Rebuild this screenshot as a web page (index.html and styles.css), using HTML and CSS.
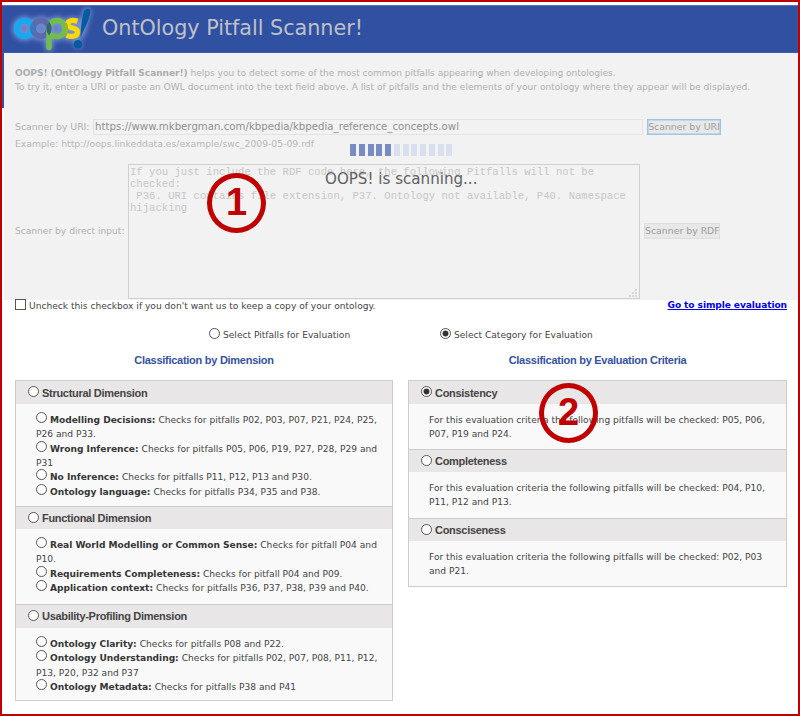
FILE: index.html
```html
<!DOCTYPE html>
<html lang="en">
<head>
<meta charset="utf-8">
<title>OOPS! OntOlogy Pitfall Scanner!</title>
<link rel="stylesheet" href="styles.css">
</head>
<body>
<div class="page">
  <header class="banner">
    <svg class="logo" width="92" height="48" viewBox="6 5 92 48">
      <defs><filter id="glow" x="-30%" y="-30%" width="160%" height="160%"><feGaussianBlur stdDeviation="2.6"/></filter></defs>
      <g filter="url(#glow)" fill="#6f8bd0" stroke="#90a9e2" stroke-width="8" opacity=".75">
        <circle cx="24.5" cy="28.500" r="8"/><circle cx="41" cy="28.500" r="8"/><circle cx="57" cy="28.500" r="8"/>
        <path d="M49 29V47M77 22Q68 19 68 24Q69 28 74 29Q79 33 76 36Q72 38 67 36M87 12L81 34M78 44h.1" stroke-linecap="round"/>
      </g>
      <circle cx="24.500" cy="28.500" r="7.800" fill="none" stroke="#16a8f0" stroke-width="5.800"/>
      <circle cx="41" cy="28.500" r="7.800" fill="none" stroke="#5d69ad" stroke-width="5.800"/>
      <path d="M49 47.500V28.500a8 8 0 1 1 8 8q-3 0-5-1" fill="none" stroke="#6fbd4c" stroke-width="5.500" stroke-linecap="round"/>
      <path d="M32.750 21.700a10.700 10.700 0 0 1 0 13.600a10.700 10.700 0 0 1 0-13.600" fill="#3c7abb"/>
      <path d="M49 21.400a10.700 10.700 0 0 1 0 14.200a10.700 10.700 0 0 1 0-14.200" fill="#37617f"/>
      <path d="M77.500 21.200C72 19.500 67.700 20.800 67.700 24.200C67.700 29.300 77.600 26.800 77.600 32C77.600 36.300 72 37.500 66.500 35.400" fill="none" stroke="#fbd905" stroke-width="5.200"/>
      <path d="M65.500 23q2.500 5.500 .5 11.500" fill="none" stroke="#93b82a" stroke-width="2.500"/>
      <path d="M80.500 37.500C81 27 82 15 84.500 10.500Q87 7.500 90 9.500Q91 14 87.500 22Z" fill="#045b9e"/>
      <circle cx="78" cy="44.200" r="4.300" fill="#045b9e"/>
    </svg>
    <h1>OntOlogy Pitfall Scanner!</h1>
  </header>

  <section class="scanner">
    <p class="intro"><b>OOPS! (OntOlogy Pitfall Scanner!)</b> <span class="first">helps you to detect some of the most common pitfalls appearing when developing ontologies.</span><br><span>To try it, enter a URI or paste an OWL document into the text field above. A list of pitfalls and the elements of your ontology where they appear will be displayed.</span></p>
    <div class="uri-row">
      <span class="uri-label">Scanner by URI:</span>
      <div class="uri-field"><span>https://www.mkbergman.com/kbpedia/kbpedia_reference_concepts.owl</span></div>
      <div class="btn focused"><span>Scanner by URI</span></div>
    </div>
    <div class="example"><span>Example: http://oops.linkeddata.es/example/swc_2009-05-09.rdf</span></div>
    <div class="rdf-row">
      <span class="rdf-label">Scanner by direct input:</span>
      <div class="rdf-field">If you just include the RDF code here, the following Pitfalls will not be<br>checked:<br> P36. URI contains file extension, P37. Ontology not available, P40. Namespace<br>hijacking<svg class="grip" width="8" height="8"><path d="M6 0h2v2H6zM3 3h2v2H3zM6 3h2v2H6zM0 6h2v2H0zM3 6h2v2H3zM6 6h2v2H6z" fill="#d6d6d6"/></svg></div>
      <div class="btn"><span>Scanner by RDF</span></div>
    </div>
    <div class="progress"><i class="on"></i><i class="on"></i><i class="on"></i><i class="on"></i><i class="on"></i><i></i><i></i><i></i><i></i><i></i><i></i><i></i></div>
    <div class="status">OOPS! is scanning...</div>
  </section>

  <div class="options">
    <i class="check"></i><span class="keep">Uncheck this checkbox if you don't want us to keep a copy of your ontology.</span>
    <a class="simple">Go to simple evaluation</a>
  </div>
  <div class="modes">
    <div><i class="radio"></i><span>Select Pitfalls for Evaluation</span></div>
    <div><i class="radio sel"></i><span>Select Category for Evaluation</span></div>
  </div>

  <main class="columns">
    <section>
      <h2>Classification by Dimension</h2>
      <div class="table dims">
        <h3><i class="radio"></i><span>Structural Dimension</span></h3>
        <div class="cell">
          <p><i class="radio"></i><b>Modelling Decisions:</b> Checks for pitfalls P02, P03, P07, P21, P24, P25,</p>
          <p>P26 and P33.</p>
          <p><i class="radio"></i><b>Wrong Inference:</b> Checks for pitfalls P05, P06, P19, P27, P28, P29 and</p>
          <p>P31</p>
          <p><i class="radio"></i><b>No Inference:</b> Checks for pitfalls P11, P12, P13 and P30.</p>
          <p><i class="radio"></i><b>Ontology language:</b> Checks for pitfalls P34, P35 and P38.</p>
        </div>
        <h3><i class="radio"></i><span>Functional Dimension</span></h3>
        <div class="cell">
          <p><i class="radio"></i><b>Real World Modelling or Common Sense:</b> Checks for pitfall P04 and</p>
          <p>P10.</p>
          <p><i class="radio"></i><b>Requirements Completeness:</b> Checks for pitfall P04 and P09.</p>
          <p><i class="radio"></i><b>Application context:</b> Checks for pitfalls P36, P37, P38, P39 and P40.</p>
        </div>
        <h3><i class="radio"></i><span>Usability-Profiling Dimension</span></h3>
        <div class="cell">
          <p><i class="radio"></i><b>Ontology Clarity:</b> Checks for pitfalls P08 and P22.</p>
          <p><i class="radio"></i><b>Ontology Understanding:</b> Checks for pitfalls P02, P07, P08, P11, P12,</p>
          <p>P13, P20, P32 and P37</p>
          <p><i class="radio"></i><b>Ontology Metadata:</b> Checks for pitfalls P38 and P41</p>
        </div>
      </div>
    </section>
    <section>
      <h2>Classification by Evaluation Criteria</h2>
      <div class="table criteria">
        <h3><i class="radio sel"></i><span>Consistency</span></h3>
        <div class="cell">
          <p>For this evaluation criteria the following pitfalls will be checked: P05, P06,</p>
          <p>P07, P19 and P24.</p>
        </div>
        <h3><i class="radio"></i><span>Completeness</span></h3>
        <div class="cell">
          <p>For this evaluation criteria the following pitfalls will be checked: P04, P10,</p>
          <p>P11, P12 and P13.</p>
        </div>
        <h3><i class="radio"></i><span>Consciseness</span></h3>
        <div class="cell">
          <p>For this evaluation criteria the following pitfalls will be checked: P02, P03</p>
          <p>and P21.</p>
        </div>
      </div>
    </section>
  </main>
  <div class="marker one"><span>1</span></div>
  <div class="marker two"><span>2</span></div>
</div>
</body>
</html>
```
FILE: styles.css
```css
* { box-sizing: border-box; }
body { margin: 0; background: #fff; }
.page {
  position: relative;
  width: 800px;
  height: 716px;
  padding-top: 3px;
  border: 2px solid #c00000;
  overflow: hidden;
  font: 9.1px/14.35px "DejaVu Sans", Verdana, sans-serif;
  color: #444;
  white-space: nowrap;
}
h1, h2, h3, p { margin: 0; }
i { display: block; flex: none; font-style: normal; }

.banner {
  display: flex;
  height: 48px;
  padding-left: 4px;
  background: #3050a2;
  border-top: 1px solid #5872b4;
  border-bottom: 1px solid #405ca8;
}
.logo { flex: none; margin-top: -1px; }
h1 {
  margin-left: 4px;
  font-size: 20.7px;
  font-weight: 400;
  line-height: 44px;
  color: #bfc1c8;
}

.scanner {
  position: relative;
  height: 247px;
  margin-left: 2px;
  padding: 13px 0 0 11px;
  background: #f2f2f2;
  color: #b0b0b0;
}
.scanner::before {
  content: "";
  position: absolute;
  left: -2px;
  top: 0;
  width: 2px;
  height: 55px;
  background: #3050a2;
}
.intro b { color: #acacac; letter-spacing: -.07px; }
.first { letter-spacing: -.045px; }
.uri-row { display: flex; height: 17px; margin-top: 24px; align-items: center; }
.uri-label { width: 78px; font-size: 9.3px; }
.uri-field {
  width: 550px;
  height: 16px;
  padding-left: 1px;
  border: 1px solid #e3e3e3;
  font-size: 10.2px;
  line-height: 14px;
  color: #8f8f8f;
}
.btn {
  width: 76px;
  height: 16px;
  margin-left: 4px;
  border: 1px solid #dedede;
  background: #e8e8e8;
  font-size: 9.35px;
  line-height: 14px;
  text-align: center;
  color: #9c9c9c;
}
.btn.focused { width: 74px; border: 1px solid #9fc4e8; box-shadow: inset 0 0 0 .5px #9fc4e8; }
.example { height: 28px; padding-top: 1px; font-size: 9.25px; color: #b8b8b8; }
.rdf-row { display: flex; align-items: center; height: 135px; }
.rdf-label { width: 113px; }
.rdf-field {
  position: relative;
  width: 512px;
  height: 135px;
  padding: 1px;
  border: 1px solid #cfcfcf;
  font: 10.6px/12px "Liberation Mono", "Courier New", monospace;
  color: #c6c6c6;
  white-space: pre;
}
.grip { position: absolute; right: 2px; bottom: 1px; }
.progress { position: absolute; left: 346px; top: 91px; display: flex; gap: 2.75px; }
.progress i { width: 6px; height: 12px; background: #d9dfee; }
.progress .on { background: #788bc3; }
.status { position: absolute; left: 321px; top: 116px; font-size: 15.1px; line-height: 20px; color: #606060; }

.options { display: flex; height: 27px; padding: 0 11px 0 13px; }
.check { width: 11px; height: 11px; margin-top: -1px; border: 1px solid #555; background: #fff; z-index: 1; }
.keep { margin-left: 3px; line-height: 13px; }
.simple { margin-left: auto; line-height: 11px; font-weight: 700; letter-spacing: -.1px; color: #0000f0; text-decoration: underline; }
.modes { display: grid; grid-template-columns: 231px 1fr; height: 23px; margin-left: 207px; }
.modes div { display: flex; height: 15px; align-items: center; }
.modes span { margin-left: 3px; padding-top: 1px; }
.radio {
  width: 11px;
  height: 11px;
  border: 1px solid #555;
  border-radius: 50%;
  background: #fff;
}
.radio.sel { background: radial-gradient(circle, #333 0 2.6px, #fff 3.4px); }
.modes .radio { margin-top: -3px; }

.columns { display: grid; grid-template-columns: 378px 379px; gap: 15px; margin-left: 13px; }
h2 {
  height: 30px;
  font: 700 11px/20px "Liberation Sans", Arial, sans-serif;
  letter-spacing: -.27px;
  color: #3552a0;
  text-align: center;
}
.table { display: grid; border: 1px solid #ccc; background: #f9f9f9; }
.dims { height: 321px; grid-template-rows: 23px 102px 23px 75px 24px 72px; }
.criteria { height: 207px; grid-template-rows: 23px 45px 23px 46px 23px 45px; }
h3 {
  display: flex;
  padding-left: 12px;
  background: #e8e6e7;
  font: 700 11px/24px "Liberation Sans", Arial, sans-serif;
  letter-spacing: -.29px;
  color: #444;
}
.cell + h3 { border-top: 1px solid #ccc; line-height: 23px; }
h3 .radio { margin-top: 5px; }
h3 span { margin-left: 3px; }
.cell { padding: 9px 0 0 20px; height: 0; }
.cell p { display: flex; gap: 3px; height: 14.35px; }
.cell .radio { margin: -1px 0 0; }
.cell b { color: #363636; letter-spacing: -.03px; }

.marker {
  position: absolute;
  width: 59px;
  height: 60px;
  border: 5px solid #c00000;
  border-radius: 50%;
  font: 700 38px/49px "Liberation Sans", Arial, sans-serif;
  text-align: center;
  color: #c00000;
}
.one { left: 205px; top: 171px; }
.two { left: 537px; top: 381px; }
```
